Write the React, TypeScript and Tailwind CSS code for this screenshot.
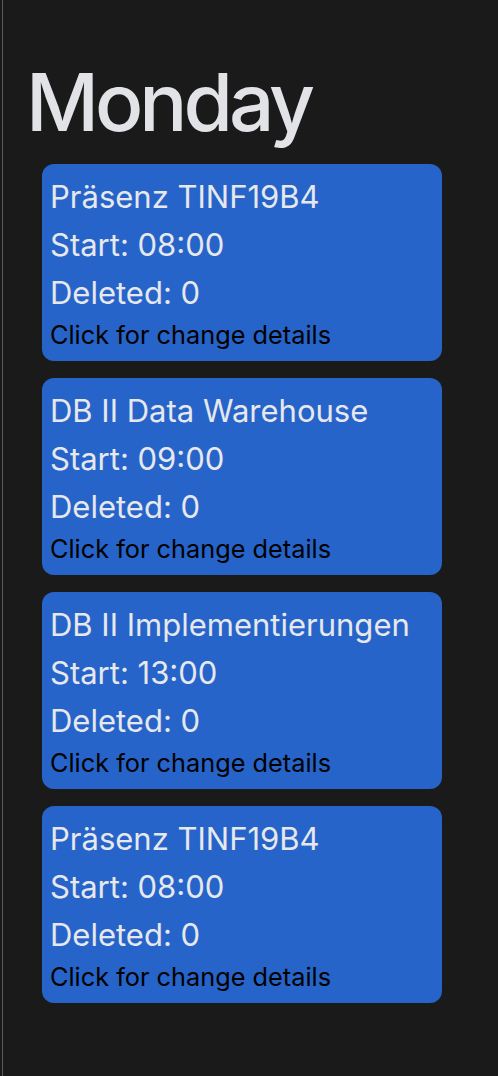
const lessons = [
  { name: 'Präsenz TINF19B4', start: '08:00', deleted: 0 },
  { name: 'DB II Data Warehouse', start: '09:00', deleted: 0 },
  { name: 'DB II Implementierungen', start: '13:00', deleted: 0 },
  { name: 'Präsenz TINF19B4', start: '08:00', deleted: 0 },
];

export default function App() {
  return (
    <div
      className="min-h-[1076px] bg-[#1b1a1b] pl-[2px]"
      style={{ fontFamily: 'Inter, "Liberation Sans", sans-serif' }}
    >
      <div className="min-h-[1076px] border-l border-[#5a595a] pl-[23px] pt-[62px]">
        <h1 className="text-[80px] leading-[80px] font-medium tracking-[-4px] text-[#e1e3e7]">Monday</h1>
        <div className="mt-[22px] ml-[16px] flex w-[400px] flex-col gap-[17px]">
          {lessons.map((lesson, i) => (
            <div
              key={i}
              className="cursor-pointer rounded-xl bg-[#2664c9] pt-[9px] pb-[8px] pl-[8px]"
            >
              <p className="text-[31px] leading-[48px] text-[#e6e8ec]">{lesson.name}</p>
              <p className="text-[31px] leading-[48px] text-[#e6e8ec]">Start: {lesson.start}</p>
              <p className="text-[31px] leading-[48px] text-[#e6e8ec]">Deleted: {lesson.deleted}</p>
              <p className="text-[25.3px] leading-[36px] text-black">Click for change details</p>
            </div>
          ))}
        </div>
      </div>
    </div>
  );
}
